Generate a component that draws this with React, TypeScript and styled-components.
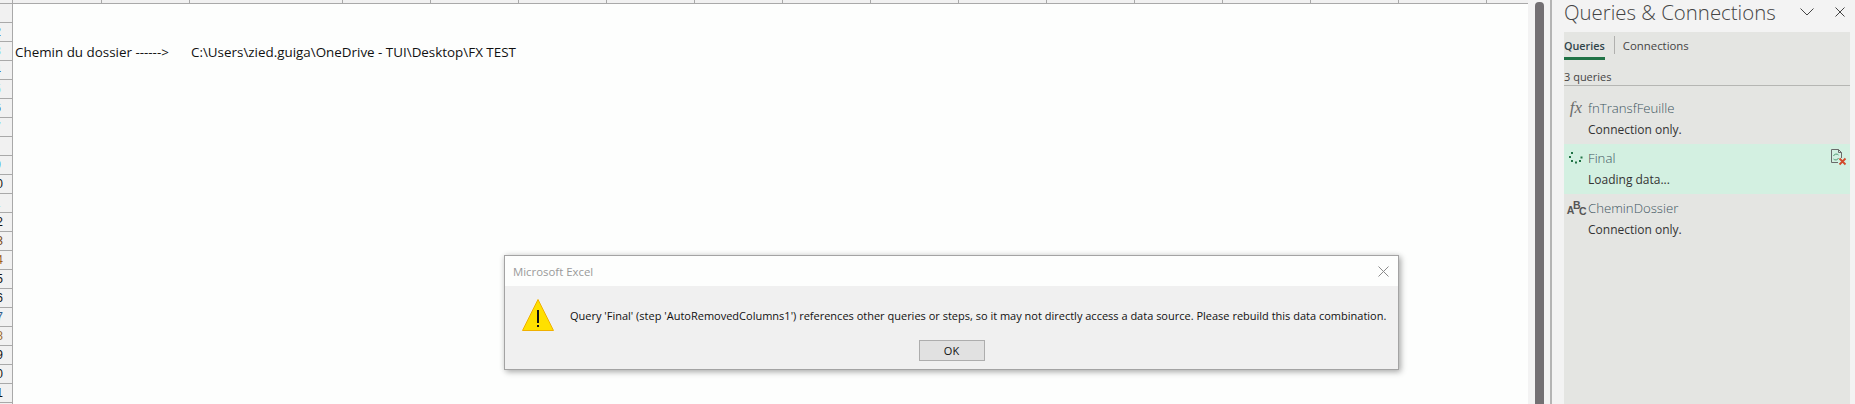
import React from 'react';
import styled, { createGlobalStyle } from 'styled-components';

const GlobalStyle = createGlobalStyle`
  html, body {
    margin: 0;
    padding: 0;
    background: #f3f3f3;
    overflow: hidden;
  }
`;

const Page = styled.div`
  position: relative;
  display: flex;
  width: 1855px;
  height: 404px;
  overflow: hidden;
  font-family: 'Open Sans', 'Noto Sans', sans-serif;
`;

const Sheet = styled.div`
  display: flex;
  width: 1528px;
  height: 404px;
  flex: none;
  background: #fdfefd;
`;

const RowHeaders = styled.div`
  display: flex;
  flex-direction: column;
  width: 13px;
  flex: none;
  background: #f1f1f1;
  border-right: 1px solid #a9a9a9;
  box-sizing: border-box;
`;

const Corner = styled.div`
  height: 4px;
  flex: none;
  box-sizing: border-box;
  border-bottom: 1px solid #a9a9a9;
`;

const RowHeader = styled.div<{ $tint?: string; $inset?: number }>`
  display: flex;
  justify-content: flex-end;
  align-items: center;
  height: 19px;
  flex: none;
  box-sizing: border-box;
  border-bottom: 1px solid #a9a9a9;
  overflow: hidden;
  padding-right: ${(props) => props.$inset ?? 9}px;
  font-family: 'Liberation Sans', sans-serif;
  font-size: 12px;
  color: ${(props) => props.$tint ?? '#111'};
`;

const Grid = styled.div`
  display: flex;
  flex-direction: column;
  flex: 1;
  min-width: 0;
`;

const ColumnHeaders = styled.div`
  display: flex;
  height: 4px;
  flex: none;
  box-sizing: border-box;
  background: #f1f1f1;
  border-bottom: 1px solid #a9a9a9;
`;

const ColumnHeader = styled.div<{ $w: number }>`
  width: ${(props) => props.$w}px;
  flex: none;
  box-sizing: border-box;
  border-right: 1px solid #a9a9a9;
`;

const CellRow = styled.div`
  display: flex;
  margin-top: 38px;
  padding-left: 2px;
  height: 19px;
  align-items: center;
  font-size: 13.4px;
  color: #111;
  white-space: nowrap;
`;

const LabelCell = styled.span`
  width: 176px;
  flex: none;
`;

const Gutter = styled.div`
  width: 24px;
  flex: none;
  box-sizing: border-box;
  display: flex;
  padding-left: 7px;
  background: #f3f3f3;
  border-right: 2px solid #b4b4b4;
`;

const Thumb = styled.div`
  width: 9px;
  margin-top: 2px;
  background: #737073;
  border-radius: 4px 4px 0 0;
`;

const Pane = styled.aside`
  flex: 1;
  display: flex;
  flex-direction: column;
  padding: 0 5px 0 12px;
  min-width: 0;
  background: #f3f3f3;
`;

const PaneHead = styled.div`
  display: flex;
  align-items: center;
  height: 32px;
  flex: none;
  box-sizing: border-box;
  padding-bottom: 9px;
  color: #444;
`;

const PaneTitle = styled.h2`
  margin: 0;
  flex: 1;
  font-size: 20.4px;
  font-weight: 300;
  line-height: 24px;
  white-space: nowrap;
`;

const HeadIcon = styled.svg<{ $gap?: number }>`
  display: block;
  flex: none;
  margin-right: ${(props) => props.$gap ?? 0}px;
`;

const PaneBody = styled.div`
  flex: 1;
  background: #e4e5e2;
`;

const Tabs = styled.div`
  display: flex;
  height: 28px;
  box-sizing: border-box;
  align-items: flex-start;
  padding-top: 4px;
`;

const Tab = styled.div<{ $active?: boolean }>`
  height: 24px;
  line-height: 20px;
  box-sizing: border-box;
  font-size: ${(props) => (props.$active ? 10.8 : 11.4)}px;
  white-space: nowrap;
  font-weight: ${(props) => (props.$active ? 600 : 400)};
  color: ${(props) => (props.$active ? '#30444a' : '#444')};
  border-bottom: ${(props) => (props.$active ? '3px solid #217346' : 'none')};
`;

const TabDivider = styled.div`
  width: 1px;
  height: 18px;
  background: #b0b0ae;
  margin: 0 8px 0 9px;
`;

const Count = styled.div`
  height: 26px;
  padding-top: 8px;
  margin-bottom: 8px;
  line-height: 17px;
  box-sizing: border-box;
  font-size: 11px;
  color: #444;
  border-bottom: 1px solid #b5b6b3;
`;

const QueryItem = styled.div<{ $active?: boolean }>`
  position: relative;
  display: grid;
  grid-template-columns: 24px 1fr;
  grid-template-rows: 28px 16px;
  height: 50px;
  background: ${(props) => (props.$active ? '#d3f0e1' : 'transparent')};
`;

const QueryIcon = styled.div`
  display: flex;
  align-items: center;
  justify-content: center;
  color: #666;
`;

const FxGlyph = styled.span`
  font-family: 'Liberation Serif', serif;
  font-style: italic;
  font-size: 17px;
  color: #6b6b6b;
`;

const AbcGlyph = styled.span`
  display: flex;
  font-family: 'Liberation Sans', sans-serif;
  font-weight: 700;
  font-size: 10.5px;
  color: #555;
  line-height: 10px;
`;

const AbcLetter = styled.span<{ $shift: number }>`
  margin-right: -1.5px;
  transform: translateY(${(props) => props.$shift}px);
`;

const QueryName = styled.div`
  font-size: 13.2px;
  font-weight: 300;
  line-height: 28px;
  color: #40555f;
  white-space: nowrap;
`;

const QueryStatus = styled.div`
  grid-column: 2;
  font-size: 12px;
  line-height: 16px;
  color: #333;
  white-space: nowrap;
`;

const RowAction = styled.svg`
  position: absolute;
  top: 5px;
  right: 3px;
`;

const Dialog = styled.div`
  position: absolute;
  left: 504px;
  top: 255px;
  width: 895px;
  height: 115px;
  box-sizing: border-box;
  display: flex;
  flex-direction: column;
  border: 1px solid #a3a3a3;
  box-shadow: 2px 2px 6px rgba(0, 0, 0, 0.3), 0 0 6px rgba(0, 0, 0, 0.08);
  background: #f0f0f0;
`;

const DialogBar = styled.div`
  display: flex;
  align-items: center;
  justify-content: space-between;
  height: 30px;
  flex: none;
  padding: 0 9px 0 8px;
  background: #fdfefd;
  font-size: 11.4px;
  color: #9a9a9a;
`;

const DialogBody = styled.div`
  display: flex;
  align-items: center;
  gap: 16px;
  padding: 13px 0 0 17px;
  height: 32px;
`;

const WarningIcon = styled.svg`
  flex: none;
  display: block;
`;

const DialogText = styled.div`
  font-size: 11px;
  color: #111;
  white-space: nowrap;
`;

const DialogFoot = styled.div`
  display: flex;
  justify-content: center;
  padding-top: 9px;
`;

const OkButton = styled.button`
  width: 66px;
  height: 21px;
  padding: 0;
  box-sizing: border-box;
  border: 1px solid #adadad;
  background: #e1e1e1;
  font-family: inherit;
  font-size: 11px;
  color: #111;
`;

const columnWidths = [89, 88, 153, 88, 88, ...Array(11).fill(88), 42];

const rows: { label?: string; tint?: string; inset?: number }[] = [
  {},
  { label: '2', tint: '#10508a', inset: 11 },
  { label: '3', tint: '#7fd8ee', inset: 11 },
  { label: '4', tint: '#1c5c9c', inset: 11 },
  { label: '5', tint: '#8fe0f2', inset: 11 },
  { label: '6', tint: '#12386e', inset: 11 },
  { label: '7', tint: '#7fd8ee', inset: 11 },
  {},
  { label: '9', tint: '#3f9be0', inset: 11 },
  { label: '10' },
  { label: '11', tint: '#b4ecf6', inset: 11 },
  { label: '12' },
  { label: '13', tint: '#7a4a20' },
  { label: '14', tint: '#a06018' },
  { label: '15' },
  { label: '16' },
  { label: '17', tint: '#2d5c8c' },
  { label: '18', tint: '#9a6a30' },
  { label: '19' },
  { label: '20' },
  { label: '21' },
  { label: '22' },
];

function Spinner() {
  const dots = [
    [3, 2], [1, 6], [3, 10], [7, 11.5], [11, 10], [12.5, 6.5],
  ];
  return (
    <svg width="14" height="14" viewBox="0 0 14 14">
      {dots.map(([x, y]) => (
        <rect key={`${x}-${y}`} x={x - 1} y={y - 1} width="2" height="2" fill="#217346" />
      ))}
    </svg>
  );
}

export default function App() {
  return (
    <Page>
      <GlobalStyle />
      <Sheet>
        <RowHeaders>
          <Corner />
          {rows.map((row, i) => (
            <RowHeader key={i} $tint={row.tint} $inset={row.inset}>{row.label}</RowHeader>
          ))}
        </RowHeaders>
        <Grid>
          <ColumnHeaders>
            {columnWidths.map((w, i) => <ColumnHeader key={i} $w={w} />)}
          </ColumnHeaders>
          <CellRow>
            <LabelCell>Chemin du dossier ------&gt;</LabelCell>
            <span>C:\Users\zied.guiga\OneDrive - TUI\Desktop\FX TEST</span>
          </CellRow>
        </Grid>
      </Sheet>
      <Gutter>
        <Thumb />
      </Gutter>
      <Pane>
        <PaneHead>
          <PaneTitle>Queries &amp; Connections</PaneTitle>
          <HeadIcon $gap={21} width="14" height="8" viewBox="0 0 14 8" fill="none" stroke="#444">
            <path d="M0.5 0.5 L7 7 L13.5 0.5" />
          </HeadIcon>
          <HeadIcon $gap={5} width="10" height="10" viewBox="0 0 10 10" fill="none" stroke="#444">
            <path d="M0.5 0.5 L9.5 9.5 M9.5 0.5 L0.5 9.5" />
          </HeadIcon>
        </PaneHead>
        <PaneBody>
          <Tabs>
            <Tab $active>Queries</Tab>
            <TabDivider />
            <Tab>Connections</Tab>
          </Tabs>
          <Count>3 queries</Count>
          <QueryItem>
            <QueryIcon><FxGlyph>fx</FxGlyph></QueryIcon>
            <QueryName>fnTransfFeuille</QueryName>
            <QueryStatus>Connection only.</QueryStatus>
          </QueryItem>
          <QueryItem $active>
            <QueryIcon><Spinner /></QueryIcon>
            <QueryName>Final</QueryName>
            <QueryStatus>Loading data...</QueryStatus>
            <RowAction width="17" height="17" viewBox="0 0 17 17" fill="none">
              <path d="M1.5 0.5 H8.5 L11.5 3.5 V9 M8 13.5 H1.5 V0.5 M8.5 0.5 V3.5 H11.5" stroke="#6a6a6a" />
              <path d="M3.5 7 A3 3 0 0 1 8.5 6 M8.5 9 A3 3 0 0 1 3.5 10" stroke="#4e9a70" />
              <path d="M9.5 9.5 L15.5 15.5 M15.5 9.5 L9.5 15.5" stroke="#d2492a" strokeWidth="1.8" />
            </RowAction>
          </QueryItem>
          <QueryItem>
            <QueryIcon>
              <AbcGlyph>
                <AbcLetter $shift={2}>A</AbcLetter>
                <AbcLetter $shift={-3}>B</AbcLetter>
                <AbcLetter $shift={3}>C</AbcLetter>
              </AbcGlyph>
            </QueryIcon>
            <QueryName>CheminDossier</QueryName>
            <QueryStatus>Connection only.</QueryStatus>
          </QueryItem>
        </PaneBody>
      </Pane>
      <Dialog>
        <DialogBar>
          <span>Microsoft Excel</span>
          <svg width="11" height="11" viewBox="0 0 11 11" fill="none" stroke="#8a8a8a">
            <path d="M0.5 0.5 L10.5 10.5 M10.5 0.5 L0.5 10.5" />
          </svg>
        </DialogBar>
        <DialogBody>
          <WarningIcon width="32" height="32" viewBox="0 0 32 32">
            <path d="M16 0.5 L31.5 31.5 H0.5 Z" fill="#ffe000" stroke="#f0b000" strokeLinejoin="round" />
            <rect x="15" y="11" width="2" height="13" fill="#111" />
            <rect x="15" y="26" width="2" height="2" fill="#111" />
          </WarningIcon>
          <DialogText>Query 'Final' (step 'AutoRemovedColumns1') references other queries or steps, so it may not directly access a data source. Please rebuild this data combination.</DialogText>
        </DialogBody>
        <DialogFoot>
          <OkButton>OK</OkButton>
        </DialogFoot>
      </Dialog>
    </Page>
  );
}
